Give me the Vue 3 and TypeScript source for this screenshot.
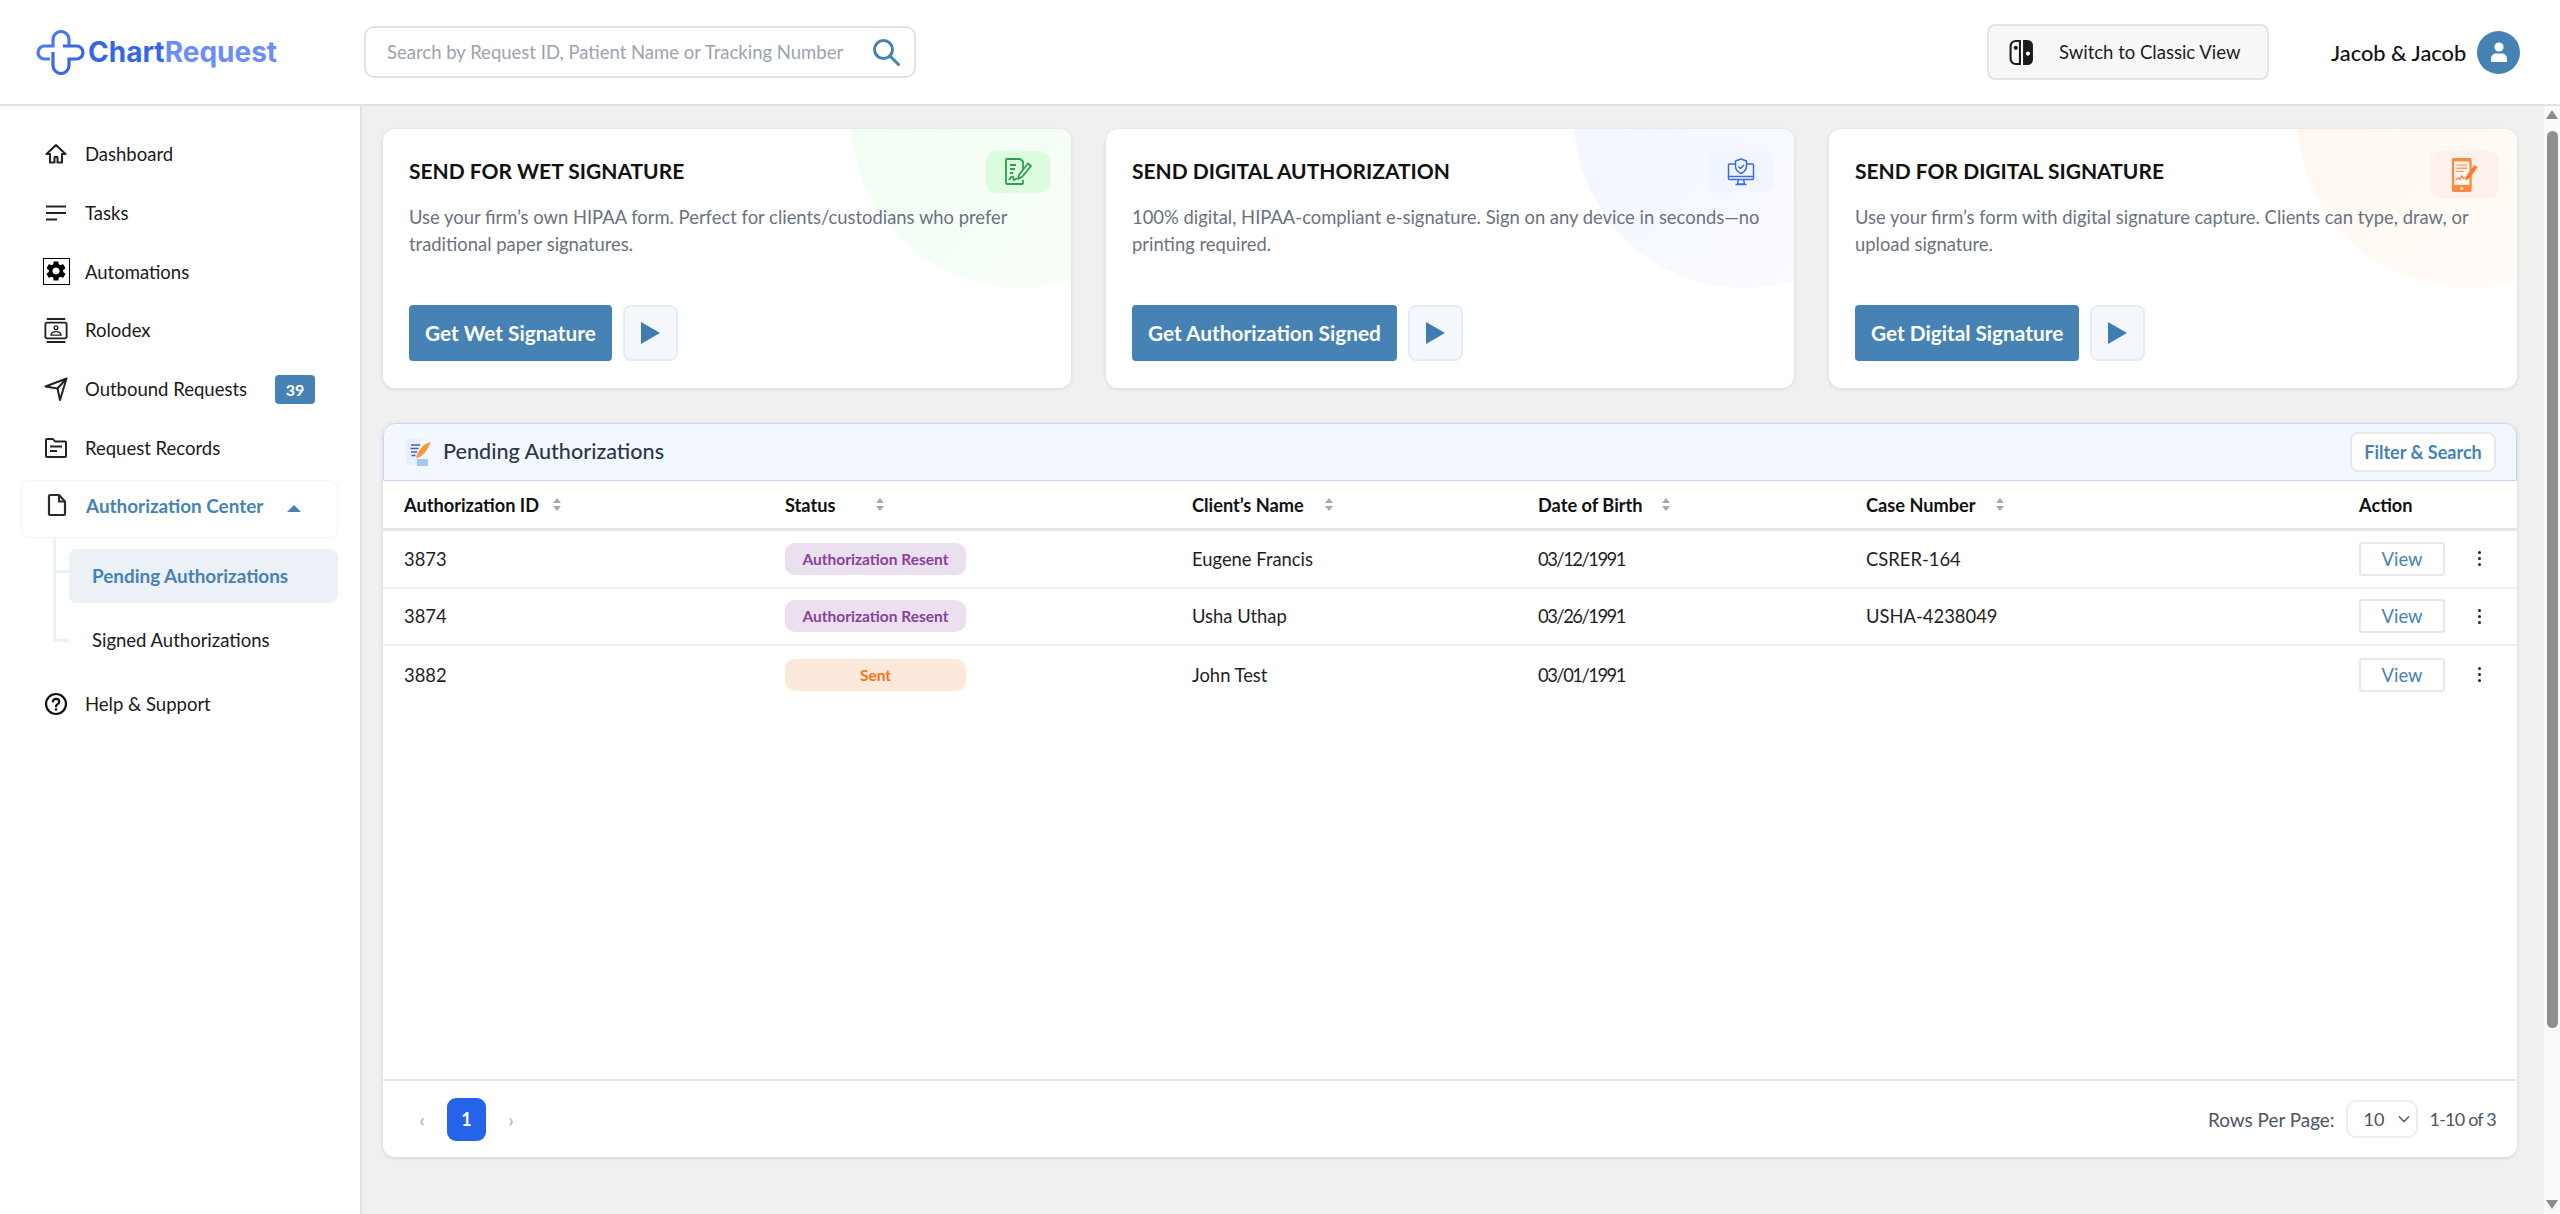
<script setup lang="ts">
interface NavItem {
  label: string;
  icon: string;
  badge?: number;
}

const navTop: NavItem[] = [
  { label: 'Dashboard', icon: 'home' },
  { label: 'Tasks', icon: 'tasks' },
  { label: 'Automations', icon: 'gear' },
  { label: 'Rolodex', icon: 'rolodex' },
  { label: 'Outbound Requests', icon: 'send', badge: 39 },
  { label: 'Request Records', icon: 'folder' }
];

const cards = [
  {
    title: 'SEND FOR WET SIGNATURE',
    text: 'Use your firm’s own HIPAA form. Perfect for clients/custodians who prefer traditional paper signatures.',
    action: 'Get Wet Signature',
    tone: 'green'
  },
  {
    title: 'SEND DIGITAL AUTHORIZATION',
    text: '100% digital, HIPAA-compliant e-signature. Sign on any device in seconds—no printing required.',
    action: 'Get Authorization Signed',
    tone: 'blue'
  },
  {
    title: 'SEND FOR DIGITAL SIGNATURE',
    text: 'Use your firm’s form with digital signature capture. Clients can type, draw, or upload signature.',
    action: 'Get Digital Signature',
    tone: 'orange'
  }
];

const columns = [
  { label: 'Authorization ID', sortGap: 14 },
  { label: 'Status', sortGap: 41 },
  { label: 'Client’s Name', sortGap: 21 },
  { label: 'Date of Birth', sortGap: 19 },
  { label: 'Case Number', sortGap: 20 }
];

const rows = [
  { id: '3873', status: 'Authorization Resent', tone: 'purple', client: 'Eugene Francis', dob: '03/12/1991', caseNo: 'CSRER-164' },
  { id: '3874', status: 'Authorization Resent', tone: 'purple', client: 'Usha Uthap', dob: '03/26/1991', caseNo: 'USHA-4238049' },
  { id: '3882', status: 'Sent', tone: 'peach', client: 'John Test', dob: '03/01/1991', caseNo: '' }
];
</script>

<template>
  <div class="page">
    <header class="topbar">
      <div class="logo">
        <svg class="logo-mark" viewBox="-2 -2 49 45" fill="none" stroke-width="3.2">
          <path d="M31 14V7.500a8 8 0 0 0-16 0V14H6.500a6.500 6.500 0 0 0 0 13H12" stroke="#4a78f2" />
          <path d="M15 20v13.500a8 8 0 0 0 16 0V27h7.500a6.500 6.500 0 0 0 0-13H25" stroke="#3a66ea" />
        </svg>
        <span class="logo-text">Chart<em>Request</em></span>
      </div>
      <div class="search">
        <span class="search-text">Search by Request ID, Patient Name or Tracking Number</span>
        <svg class="search-icon" viewBox="0 0 28 28" fill="none" stroke="#4682b4" stroke-width="3">
          <circle cx="11.500" cy="11.500" r="9" />
          <path d="M18 18l8.500 8.500" stroke-linecap="round" />
        </svg>
      </div>
      <button class="classic-btn">
        <svg class="switch-icon" viewBox="0 0 24 24">
          <path d="M10.500 1H6.500A5 5 0 0 0 1.500 6v12a5 5 0 0 0 5 5h4z" fill="none" stroke="#1c1c1c" stroke-width="2" />
          <circle cx="6.500" cy="7.500" r="2" fill="#1c1c1c" />
          <path d="M13.500 0h4.200A5.300 5.300 0 0 1 23 5.300v13.400a5.300 5.300 0 0 1-5.300 5.300h-4.200z" fill="#1c1c1c" />
          <circle cx="18.200" cy="13" r="2" fill="#fff" />
        </svg>
        <span>Switch to Classic View</span>
      </button>
      <div class="user">
        <span class="user-name">Jacob &amp; Jacob</span>
        <span class="avatar">
          <svg viewBox="0 0 24 24" width="24" height="24" fill="#fff">
            <circle cx="12" cy="7" r="4.600" />
            <path d="M4 22v-3.500c0-3 2.500-5 5-5h6c2.500 0 5 2 5 5V22z" />
          </svg>
        </span>
      </div>
    </header>

    <div class="body">
      <aside class="sidebar">
        <nav class="nav">
          <a v-for="item in navTop" :key="item.label" class="nav-item">
            <span class="nav-icon">
              <svg v-if="item.icon === 'home'" viewBox="0 0 24 24" width="24" height="24" fill="none" stroke="#222" stroke-width="2" stroke-linejoin="round">
                <path d="M12 3 2.500 12H6v8.500h4.500V15h3v5.500H18V12h3.500z" />
              </svg>
              <svg v-else-if="item.icon === 'tasks'" viewBox="0 0 24 24" width="24" height="24" fill="#222">
                <path d="M2 4.500h20v2H2zM2 11h20v2H2zM2 17.500h11v2H2z" />
              </svg>
              <span v-else-if="item.icon === 'gear'" class="gear-box">
                <svg viewBox="0 0 24 24" width="24" height="24" fill="#000">
                  <path d="M19.140 12.940c.04-.3.06-.61.06-.94 0-.32-.02-.64-.07-.94l2.030-1.580a.49.49 0 0 0 .12-.61l-1.920-3.320a.488.488 0 0 0-.59-.22l-2.390.96c-.5-.38-1.030-.7-1.620-.94l-.36-2.540a.484.484 0 0 0-.48-.41h-3.840c-.24 0-.43.17-.47.41l-.36 2.540c-.59.24-1.130.57-1.620.94l-2.390-.96c-.22-.08-.47 0-.59.22L2.740 8.870c-.12.21-.08.47.12.61l2.030 1.580c-.05.3-.09.63-.09.94s.02.64.07.94l-2.030 1.580a.49.49 0 0 0-.12.61l1.920 3.320c.12.22.37.29.59.22l2.390-.96c.5.38 1.030.7 1.620.94l.36 2.540c.05.24.24.41.48.41h3.840c.24 0 .44-.17.47-.41l.36-2.540c.59-.24 1.130-.56 1.620-.94l2.390.96c.22.08.47 0 .59-.22l1.920-3.320c.12-.22.07-.47-.12-.61l-2.010-1.580zM12 15.600c-1.980 0-3.600-1.620-3.600-3.600s1.620-3.600 3.600-3.600 3.600 1.620 3.600 3.600-1.620 3.600-3.600 3.600z" />
                </svg>
              </span>
              <svg v-else-if="item.icon === 'rolodex'" viewBox="0 0 26 28" width="24" height="27" fill="none" stroke="#222" stroke-width="2">
                <path d="M3 1.500h20M3 26.500h20" />
                <rect x="1.500" y="5.500" width="23" height="17" rx="2" />
                <circle cx="13" cy="11" r="2" stroke-width="1.500" />
                <path d="M7.500 19c.5-3 3-3.800 5.500-3.800s5 .8 5.500 3.800z" stroke-width="1.500" />
              </svg>
              <svg v-else-if="item.icon === 'send'" viewBox="0 0 24 24" width="24" height="24" fill="none" stroke="#222" stroke-width="2" stroke-linejoin="round">
                <path d="M22.500 1.500 1.500 9.500l12 2 2.500 11.500zM13.500 11.500l9-10" />
              </svg>
              <svg v-else viewBox="0 0 24 24" width="24" height="24" fill="none" stroke="#222" stroke-width="2" stroke-linejoin="round">
                <path d="M2 4a1 1 0 0 1 1-1h6l2 2.500h10a1 1 0 0 1 1 1V20a1 1 0 0 1-1 1H3a1 1 0 0 1-1-1z" />
                <path d="M6 10.500h12M6 15h7" />
              </svg>
            </span>
            <span class="nav-label">{{ item.label }}</span>
            <span v-if="item.badge" class="nav-badge">{{ item.badge }}</span>
          </a>

          <a class="nav-item nav-open">
            <span class="nav-icon">
              <svg viewBox="0 0 24 24" width="24" height="24" fill="none" stroke="#2b2b2b" stroke-width="2.200" stroke-linejoin="round">
                <path d="M4 3a1 1 0 0 1 1-1h9l6 6.500V21a1 1 0 0 1-1 1H5a1 1 0 0 1-1-1z" />
                <path d="M14 2v6.500h6" />
              </svg>
            </span>
            <span class="nav-label">Authorization Center</span>
            <span class="caret"></span>
          </a>
          <div class="subnav">
            <a class="sub-item sub-active">Pending Authorizations</a>
            <a class="sub-item">Signed Authorizations</a>
          </div>

          <a class="nav-item">
            <span class="nav-icon">
              <svg viewBox="0 0 24 24" width="24" height="24" fill="none" stroke="#111" stroke-width="2.200">
                <circle cx="12" cy="12" r="10" />
                <path d="M8.800 9.500A3.300 3.300 0 0 1 12 6.800c1.900 0 3.300 1.200 3.300 2.900 0 2.500-3.300 2.500-3.300 4.800" stroke-linecap="round" />
                <circle cx="12" cy="17.500" r="1.300" fill="#111" stroke="none" />
              </svg>
            </span>
            <span class="nav-label">Help &amp; Support</span>
          </a>
        </nav>
      </aside>

      <main class="content">
        <section class="cards">
          <article v-for="card in cards" :key="card.title" class="card">
            <span class="card-blob" :class="`blob-${card.tone}`"></span>
            <div class="card-head">
              <h3 class="card-title">{{ card.title }}</h3>
              <span class="card-icon" :class="`icon-${card.tone}`">
                <svg v-if="card.tone === 'green'" viewBox="0 0 28 28" width="28" height="28" fill="none" stroke="#2f9e4f" stroke-width="1.800" stroke-linejoin="round">
                  <path d="M19 12V3.500L16 1H3a1 1 0 0 0-1 1v23a1 1 0 0 0 1 1h15a1 1 0 0 0 1-1v-3" />
                  <path d="M6 7h6M6 11h5M6 15h3" />
                  <path d="M14 21l1.500-5L24 5.500l3 2.500-8.500 10.500z" />
                  <path d="M5 22c2-3 3-4 4-3s0 3 1 3 2-2 3-1" />
                </svg>
                <svg v-else-if="card.tone === 'blue'" viewBox="0 0 28 28" width="28" height="28" fill="none" stroke="#3b6cf0" stroke-width="1.500" stroke-linejoin="round">
                  <path d="M8 6H2.500a1 1 0 0 0-1 1v13.500a1 1 0 0 0 1 1h23a1 1 0 0 0 1-1V7a1 1 0 0 0-1-1H20" />
                  <path d="M1.500 18.500h25M11.500 21.500l-1 4.500h7l-1-4.500M8.500 26.500h11" />
                  <path d="M14 1l5.500 2v5.500c0 3.500-2.500 5.500-5.500 7-3-1.500-5.500-3.500-5.500-7V3z" />
                  <path d="M11.500 8.500l2 2 3.500-3.500" />
                </svg>
                <svg v-else viewBox="0 0 30 40" width="27" height="36" fill="none">
                  <rect x="1" y="1" width="22" height="38" rx="2" fill="#f98a42" />
                  <rect x="3.500" y="5" width="17" height="26" fill="#fff3ec" />
                  <path d="M6 9h12M6 12.500h12M6 16h8" stroke="#f9a066" stroke-width="1.600" />
                  <path d="M5 26l3-3 2 2 2-4 2 3 3-1" stroke="#f97a2b" stroke-width="1.200" />
                  <circle cx="12" cy="35" r="1.500" fill="#fff" />
                  <path d="M16 26l1-5L26 9l3.500 2.500-9 12z" fill="#f97a2b" />
                </svg>
              </span>
            </div>
            <p class="card-text">{{ card.text }}</p>
            <div class="card-actions">
              <button class="primary-btn">{{ card.action }}</button>
              <button class="play-btn"><span class="play-tri"></span></button>
            </div>
          </article>
        </section>

        <section class="panel">
          <div class="panel-bar">
            <svg class="panel-icon" viewBox="0 0 28 28" width="28" height="28">
              <path d="M2 1h15v26H6a4 4 0 0 1-4-4z" fill="#e8f0fd" />
              <rect x="13" y="21" width="11" height="7" rx="1" fill="#a9c6f7" />
              <path d="M7 7h9M6.500 10.500h8M7 14h6M7.500 17.500h4" stroke="#4a5fa8" stroke-width="1.600" />
              <path d="M26.500 4C20 5.500 14.500 11 12 20c4-.5 8-3.500 10-7 2.500-3.500 4-6.500 4.500-9z" fill="#f59a3c" />
            </svg>
            <h2 class="panel-title">Pending Authorizations</h2>
            <button class="filter-btn">Filter &amp; Search</button>
          </div>

          <div class="table">
            <div class="tr th-row">
              <div v-for="col in columns" :key="col.label" class="th">
                <span>{{ col.label }}</span>
                <span class="sort" :style="{ marginLeft: `${col.sortGap}px` }">
                  <i class="sort-up"></i>
                  <i class="sort-down"></i>
                </span>
              </div>
              <div class="th">Action</div>
            </div>
            <div v-for="row in rows" :key="row.id" class="tr td-row">
              <div>{{ row.id }}</div>
              <div><span class="pill" :class="`pill-${row.tone}`">{{ row.status }}</span></div>
              <div>{{ row.client }}</div>
              <div class="dob">{{ row.dob }}</div>
              <div>{{ row.caseNo }}</div>
              <div class="actions">
                <button class="view-btn">View</button>
                <span class="kebab"><i></i><i></i><i></i></span>
              </div>
            </div>
          </div>

          <div class="pager">
            <span class="pager-arrow">‹</span>
            <button class="page-btn">1</button>
            <span class="pager-arrow">›</span>
            <span class="rows-label">Rows Per Page:</span>
            <span class="rows-select">
              <span>10</span>
              <svg viewBox="0 0 12 8" width="12" height="8" fill="none" stroke="#555" stroke-width="1.500">
                <path d="M1 1.500l5 5 5-5" />
              </svg>
            </span>
            <span class="rows-count">1-10 of 3</span>
          </div>
        </section>
      </main>

      <div class="scrollbar">
        <span class="arrow-up"></span>
        <span class="thumb"></span>
        <span class="arrow-down"></span>
      </div>
    </div>
  </div>
</template>

<style scoped>
.page {
  height: 1214px;
  display: flex;
  flex-direction: column;
  font-family: Lato, 'Open Sans', sans-serif;
  color: #1a1a1a;
  background: #f0f0f0;
  overflow: hidden;
}

button {
  font-family: inherit;
  cursor: pointer;
}

.topbar {
  height: 104px;
  flex: none;
  display: flex;
  align-items: center;
  background: #fff;
  border-bottom: 2px solid #e2e2e2;
}

.logo {
  width: 364px;
  flex: none;
  display: flex;
  align-items: center;
  padding-left: 36px;
  box-sizing: border-box;
}

.logo-mark {
  width: 49px;
  height: 45px;
  flex: none;
}

.logo-text {
  margin-left: 3px;
  font-family: Inter, sans-serif;
  font-weight: 700;
  font-size: 28px;
  color: #3467e8;
}

.logo-text em {
  font-style: normal;
  color: #6b8df8;
}

.search {
  width: 552px;
  height: 52px;
  flex: none;
  display: flex;
  align-items: center;
  justify-content: space-between;
  box-sizing: border-box;
  padding: 0 14px 0 21px;
  border: 2px solid #e4e4e4;
  border-radius: 10px;
}

.search-text {
  font-size: 18.500px;
  color: #9ca3af;
}

.search-icon {
  width: 28px;
  height: 28px;
}

.classic-btn {
  margin-left: 1071px;
  width: 282px;
  height: 56px;
  flex: none;
  display: flex;
  align-items: center;
  gap: 25px;
  padding: 0 0 0 20px;
  background: #f7f7f7;
  border: 2px solid #e4e4e4;
  border-radius: 8px;
  font-size: 18.500px;
  color: #1e1e1e;
}

.switch-icon {
  width: 25px;
  height: 25px;
}

.user {
  margin-left: 62px;
  display: flex;
  align-items: center;
  gap: 11px;
}

.user-name {
  font-size: 21.800px;
  font-weight: 500;
  color: #111;
}

.avatar {
  width: 43px;
  height: 43px;
  border-radius: 50%;
  background: #4682b4;
  display: flex;
  align-items: center;
  justify-content: center;
}

.body {
  flex: 1;
  min-height: 0;
  display: flex;
}

.sidebar {
  width: 362px;
  flex: none;
  background: #fff;
  border-right: 2px solid #e2e2e2;
  box-sizing: border-box;
  padding: 19px 22px 0 21px;
}

.nav {
  display: flex;
  flex-direction: column;
}

.nav-item {
  height: 58.700px;
  display: flex;
  align-items: center;
  font-size: 18.500px;
  color: #1a1a1a;
}

.nav-icon {
  width: 64px;
  height: 28px;
  flex: none;
  display: flex;
  align-items: center;
  justify-content: center;
  padding-left: 6px;
  box-sizing: border-box;
}

.nav-icon > svg {
  flex: none;
}

.gear-box {
  width: 27px;
  height: 27px;
  flex: none;
  box-sizing: border-box;
  border: 1.500px solid #000;
  display: flex;
}

.nav-badge {
  margin-left: 28px;
  width: 40px;
  height: 29px;
  display: flex;
  align-items: center;
  justify-content: center;
  border-radius: 4px;
  background: #4682b4;
  color: #fff;
  font-size: 16px;
  font-weight: 700;
}

.nav-open {
  margin-top: 3px;
  padding-bottom: 8px;
  border: 1px solid #f3f3f3;
  border-radius: 8px;
  box-sizing: border-box;
  height: 58px;
  color: #4682b4;
  font-size: 18.900px;
  font-weight: 700;
}

.caret {
  margin-left: 24px;
  margin-top: 6px;
  width: 0;
  height: 0;
  border-left: 7px solid transparent;
  border-right: 7px solid transparent;
  border-bottom: 7px solid #4682b4;
}

.subnav {
  margin: 0 0 8px 32px;
  padding: 11px 0 0 16px;
  display: flex;
  flex-direction: column;
  gap: 10px;
  position: relative;
}

.subnav::before {
  content: '';
  position: absolute;
  left: 0;
  top: 0;
  width: 3px;
  height: 103px;
  background: #edf2f9;
}

.sub-item {
  height: 54px;
  flex: none;
  display: flex;
  align-items: center;
  padding-left: 23px;
  border-radius: 8px;
  font-size: 18.500px;
  color: #1a1a1a;
  position: relative;
}

.sub-item::before {
  content: '';
  position: absolute;
  left: -16px;
  top: 21px;
  width: 16px;
  height: 3px;
  background: #edf2f9;
}

.sub-item:last-child::before {
  top: 26px;
}

.sub-active {
  background: #ecf0f7;
  color: #4682b4;
  font-size: 18.900px;
  font-weight: 700;
  padding-bottom: 2px;
  box-sizing: border-box;
}

.content {
  flex: 1;
  min-width: 0;
  padding: 23px 27px 0 21px;
  display: flex;
  flex-direction: column;
  gap: 35px;
}

.cards {
  display: grid;
  grid-template-columns: repeat(3, 688px);
  gap: 35px;
}

.card {
  position: relative;
  height: 259px;
  box-sizing: border-box;
  padding: 26px 26px 27px;
  background: #fff;
  border-radius: 12px;
  box-shadow: 0 1px 4px rgba(0, 0, 0, 0.1);
  overflow: hidden;
  display: flex;
  flex-direction: column;
}

.card-blob {
  position: absolute;
  left: 468px;
  top: -181px;
  width: 340px;
  height: 340px;
  border-radius: 50%;
}

.blob-green {
  background: linear-gradient(135deg, #eefdf0, #fafffa);
}

.blob-blue {
  background: linear-gradient(135deg, #eff4ff, #fbfcff);
}

.blob-orange {
  background: linear-gradient(135deg, #fff5ef, #fffdf8);
}

.card-head {
  position: relative;
  display: flex;
  justify-content: space-between;
  height: 38px;
}

.card-title {
  margin: 4px 0 0;
  font-size: 21px;
  line-height: 24px;
  font-weight: 700;
  color: #111;
}

.card-icon {
  margin-top: -4px;
  margin-right: -5px;
  width: 64px;
  height: 42px;
  flex: none;
  display: flex;
  align-items: center;
  justify-content: center;
  border-radius: 10px;
}

.icon-green {
  background: #dcfce0;
}

.icon-blue {
  background: #f1f5ff;
}

.icon-orange {
  background: #fef0eb;
  width: 69px;
  height: 47px;
  margin-right: -8px;
}

.card-text {
  position: relative;
  margin: 11px 0 0;
  width: 640px;
  font-size: 18.400px;
  line-height: 27px;
  color: #6b7280;
}

.card-actions {
  position: relative;
  margin-top: auto;
  display: flex;
  gap: 11px;
}

.primary-btn {
  height: 56px;
  padding: 0 16px 2px;
  border: none;
  border-radius: 4px;
  background: #4682b4;
  color: #fff;
  font-size: 20.800px;
  font-weight: 700;
}

.play-btn {
  width: 55px;
  height: 56px;
  display: flex;
  align-items: center;
  justify-content: center;
  padding: 0;
  background: #f4f8fc;
  border: 2px solid #e1edf7;
  border-radius: 8px;
}

.play-tri {
  width: 0;
  height: 0;
  border-left: 19px solid #3f7cb2;
  border-top: 11px solid transparent;
  border-bottom: 11px solid transparent;
}

.panel {
  height: 734px;
  display: flex;
  flex-direction: column;
  background: #fff;
  border-radius: 12px;
  box-shadow: 0 1px 4px rgba(0, 0, 0, 0.12);
}

.panel-bar {
  height: 58px;
  flex: none;
  box-sizing: border-box;
  display: flex;
  align-items: center;
  padding: 0 20px;
  background: #f3f7ff;
  border: 1.500px solid #c6d6f5;
  border-radius: 12px 12px 0 0;
}

.panel-icon {
  flex: none;
  margin-right: 11px;
}

.panel-title {
  margin: 0 0 2px;
  font-size: 21.600px;
  font-weight: 500;
  color: #2d3748;
}

.filter-btn {
  margin-left: auto;
  width: 146px;
  height: 40px;
  padding: 0;
  background: #fff;
  border: 2px solid #e8e8e8;
  border-radius: 8px;
  color: #4682b4;
  font-size: 18px;
  font-weight: 700;
}

.table {
  flex: 1;
}

.tr {
  display: grid;
  grid-template-columns: 381px 407px 346px 328px 493px 1fr;
  align-items: center;
  padding-left: 21px;
  box-sizing: border-box;
  font-size: 18.400px;
}

.th-row {
  height: 50px;
  border-bottom: 3px solid #e5e5e5;
  font-weight: 700;
  color: #111;
  font-size: 18.200px;
}

.th {
  display: flex;
  align-items: center;
}

.sort {
  display: inline-flex;
  flex-direction: column;
  gap: 3px;
}

.sort i {
  display: block;
  width: 0;
  height: 0;
  border-left: 4px solid transparent;
  border-right: 4px solid transparent;
}

.sort-up {
  border-bottom: 5.500px solid #a8a8a8;
}

.sort-down {
  border-top: 5.500px solid #a8a8a8;
}

.td-row {
  height: 57.500px;
  border-bottom: 2px solid #eee;
  color: #1f1f1f;
}

.td-row:last-child {
  border-bottom: none;
}

.dob {
  letter-spacing: -1.500px;
}

.pill {
  display: flex;
  align-items: center;
  justify-content: center;
  width: 181px;
  height: 32px;
  border-radius: 10px;
  font-size: 15.500px;
  font-weight: 700;
}

.pill-purple {
  background: #ebe0f0;
  color: #8a3f9a;
}

.pill-peach {
  background: #fde8dc;
  color: #f97316;
}

.actions {
  display: flex;
  align-items: center;
}

.view-btn {
  width: 86px;
  height: 34px;
  padding: 0;
  background: #fff;
  border: 2px solid #e8e8e8;
  border-radius: 3px;
  color: #4682b4;
  font-size: 18.400px;
}

.kebab {
  margin-left: 33px;
  display: flex;
  flex-direction: column;
  gap: 3px;
}

.kebab i {
  display: block;
  width: 3px;
  height: 3px;
  border-radius: 50%;
  background: #222;
}

.pager {
  height: 78px;
  flex: none;
  box-sizing: border-box;
  display: flex;
  align-items: center;
  padding: 0 21px 0 33px;
  border-top: 2px solid #e6e6e6;
}

.pager-arrow {
  width: 12px;
  font-size: 20px;
  color: #aaa;
  text-align: center;
}

.page-btn {
  margin: 0 19px;
  width: 39px;
  height: 43px;
  padding: 0;
  border: none;
  border-radius: 9px;
  background: #2563eb;
  color: #fff;
  font-size: 18px;
  font-weight: 700;
}

.rows-label {
  margin-left: auto;
  font-size: 18.900px;
  color: #4b5563;
}

.rows-select {
  margin: 0 12px 0 11px;
  width: 72px;
  height: 38px;
  box-sizing: border-box;
  display: flex;
  align-items: center;
  justify-content: space-between;
  padding: 0 6px 0 16px;
  border: 2px solid #eceef3;
  border-radius: 10px;
  font-size: 18px;
  color: #4b5563;
}

.rows-count {
  font-size: 18px;
  letter-spacing: -0.8px;
  color: #4b5563;
}

.scrollbar {
  width: 16px;
  flex: none;
  display: flex;
  flex-direction: column;
  align-items: center;
  background: #fafafa;
  padding-top: 4px;
}

.arrow-up,
.arrow-down {
  width: 0;
  height: 0;
  border-left: 6px solid transparent;
  border-right: 6px solid transparent;
}

.arrow-up {
  border-bottom: 9px solid #8c8c8c;
}

.arrow-down {
  border-top: 9px solid #8c8c8c;
  margin-top: 172px;
}

.thumb {
  margin-top: 12px;
  width: 11px;
  height: 897px;
  border-radius: 6px;
  background: #8f8f8f;
}
</style>

<style>
html,
body {
  margin: 0;
  overflow: hidden;
}
</style>
